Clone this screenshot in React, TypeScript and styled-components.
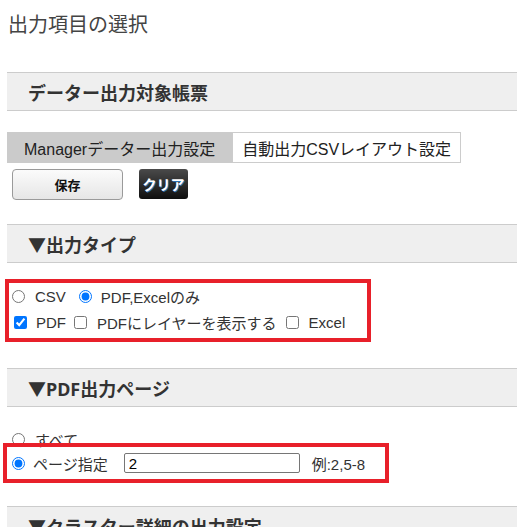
import styled, { createGlobalStyle } from "styled-components"

const GlobalStyle = createGlobalStyle`
    body {
        margin: 0;
        background: #fff;
        font-family: "Liberation Sans", "Noto Sans CJK JP", sans-serif;
        color: #333;
    }
`

const Page = styled.div`
    padding-left: 7px;
    height: 527px;
    overflow: hidden;
`
const Title = styled.h1`
    margin: 0;
    padding: 12px 0 0 1px;
    font-size: 20px;
    line-height: 26px;
    font-weight: normal;
    color: #444;
`
const SectionHeader = styled.h2<{ $top: number }>`
    display: flex;
    align-items: center;
    height: 37px;
    margin: ${p => p.$top}px 0 0;
    padding-left: 21px;
    background: #efefef;
    border-top: 1px solid #ccc;
    border-bottom: 1px solid #ccc;
    font-family: "Noto Sans", "Noto Sans CJK JP", sans-serif;
    font-size: 18px;
    font-weight: bold;
    color: #333;
`
const Tabs = styled.div`
    display: flex;
    margin-top: 21px;
    height: 31px;
`
const Tab = styled.div<{ $active?: boolean }>`
    display: flex;
    align-items: center;
    box-sizing: border-box;
    padding: 0 ${p => (p.$active ? 16 : 9)}px;
    font-size: 16px;
    color: #222;
    background: ${p => (p.$active ? "#cbcbcb" : "#fff")};
    border: 1px solid ${p => (p.$active ? "#cbcbcb" : "#ccc")};
`
const ButtonBar = styled.div`
    display: flex;
    align-items: flex-start;
    gap: 16px;
    margin: 6px 0 0 5px;
`
const SaveButton = styled.button`
    width: 111px;
    height: 31px;
    border: 1px solid #9a9a9a;
    border-radius: 4px;
    background: linear-gradient(#fbfbfb, #e6e6e6);
    font-family: inherit;
    font-size: 13px;
    font-weight: bold;
    color: #111;
`
const ClearButton = styled.button`
    width: 49px;
    height: 30px;
    border: none;
    border-radius: 3px;
    background: linear-gradient(#4a4a4a, #0e0e0e);
    font-family: inherit;
    font-size: 14px;
    font-weight: bold;
    color: #fff;
    text-shadow: 1px 1px 0 #2a6fb0;
    padding: 0;
`
const Highlight = styled.div<{ $top: number; $left: number; $width: number }>`
    position: relative;
    box-sizing: border-box;
    width: ${p => p.$width}px;
    margin: ${p => p.$top}px 0 0 ${p => p.$left}px;
    border: 4px solid #e8202a;
`
const OptionRow = styled.div<{ $height?: number; $pad?: number }>`
    display: flex;
    align-items: center;
    height: ${p => p.$height ?? 26}px;
    padding-left: ${p => p.$pad ?? 3}px;
    font-size: 15px;
    color: #333;
    white-space: nowrap;
`
const Choice = styled.label<{ $gap?: number }>`
    display: flex;
    align-items: center;
    gap: ${p => p.$gap ?? 10}px;
    margin-right: 13px;
`
const Radio = styled.input.attrs({ type: "radio" })`
    margin: 0;
    width: 13px;
    height: 13px;
`
const Check = styled.input.attrs({ type: "checkbox" })`
    margin: 0;
    width: 13px;
    height: 13px;
`
const PageInput = styled.input`
    box-sizing: border-box;
    width: 176px;
    height: 20px;
    margin: 0 12px 0 3px;
    padding: 0 4px;
    border: 1px solid #767676;
    border-radius: 2px;
    font-family: inherit;
    font-size: 15px;
    color: #000;
`

export default function App() {
    return (
        <>
            <GlobalStyle />
            <Page>
                <Title>出力項目の選択</Title>
                <SectionHeader $top={34}>データー出力対象帳票</SectionHeader>
                <Tabs>
                    <Tab $active>Managerデーター出力設定</Tab>
                    <Tab>自動出力CSVレイアウト設定</Tab>
                </Tabs>
                <ButtonBar>
                    <SaveButton>保存</SaveButton>
                    <ClearButton>クリア</ClearButton>
                </ButtonBar>

                <SectionHeader $top={24}>▼出力タイプ</SectionHeader>
                <Highlight $top={16} $left={-2} $width={366} style={{ paddingBottom: 3 }}>
                    <OptionRow>
                        <Choice><Radio name="type" />CSV</Choice>
                        <Choice $gap={9}><Radio name="type" defaultChecked />PDF,Excelのみ</Choice>
                    </OptionRow>
                    <OptionRow $pad={5}>
                        <Choice $gap={9} style={{ marginRight: 8 }}><Check defaultChecked />PDF</Choice>
                        <Choice style={{ marginRight: 9 }}><Check />PDFにレイヤーを表示する</Choice>
                        <Choice><Check />Excel</Choice>
                    </OptionRow>
                </Highlight>

                <SectionHeader $top={26}>▼PDF出力ページ</SectionHeader>
                <OptionRow $pad={5} style={{ marginTop: 19 }}>
                    <Choice><Radio name="page" />すべて</Choice>
                </OptionRow>
                <Highlight $top={-9} $left={-4} $width={386}>
                    <OptionRow $height={32} $pad={5}>
                        <Choice $gap={8}><Radio name="page" defaultChecked />ページ指定</Choice>
                        <PageInput defaultValue="2" />
                        例:2,5-8
                    </OptionRow>
                </Highlight>

                <SectionHeader $top={23}>▼クラスター詳細の出力設定</SectionHeader>
            </Page>
        </>
    )
}
